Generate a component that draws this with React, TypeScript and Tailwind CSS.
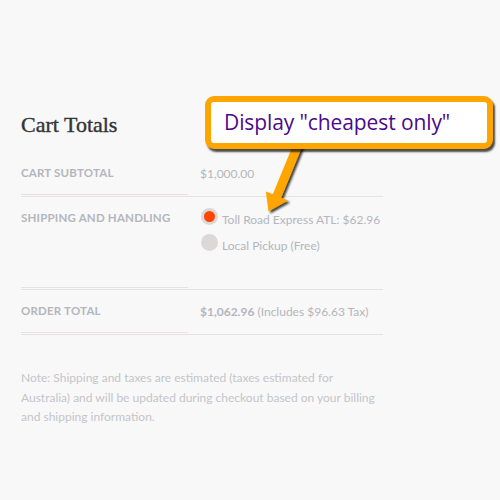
const rowLeft =
  "border-b-[3px] border-double border-[#e6e2e2] text-[11.5px] font-bold uppercase tracking-[0.2px] text-[#b3b6bc]";
const rowRight = "border-b border-[#e6e2e2] text-[12px] text-[#b3b6bc]";

const Radio = ({ checked }: { checked?: boolean }) => (
  <span className="flex h-[17px] w-[17px] shrink-0 items-center justify-center rounded-full bg-[#dcd8d8]">
    {checked && <span className="h-[11px] w-[11px] rounded-full bg-[#ff4500]" />}
  </span>
);

const Callout = () => (
  <>
    <svg className="absolute left-0 top-0" width="500" height="500" viewBox="0 0 500 500">
      <defs>
        <filter id="shadow" x="-20%" y="-20%" width="140%" height="140%">
          <feDropShadow dx="2" dy="2" stdDeviation="1.2" floodColor="#000" floodOpacity="0.75" />
        </filter>
      </defs>
      <polygon
        points="295.8,138.3 304.2,141.7 281.2,197.7 288.1,200.6 268.5,211.5 265.9,191.4 272.8,194.3"
        fill="#ffa500"
        filter="url(#shadow)"
      />
    </svg>
    <div className="absolute left-[205px] top-[96px] flex h-[53px] w-[288px] items-center rounded-[9px] border-[6px] border-[#ffa500] bg-white pl-[13px] shadow-[2px_3px_2px_rgba(0,0,0,0.7)]">
      <span className="font-['Open_Sans',sans-serif] text-[21px] leading-none tracking-[-0.1px] text-[#4b0a8a]">
        Display "cheapest only"
      </span>
    </div>
  </>
);

export default function App() {
  return (
    <div className="relative h-[500px] w-[500px] overflow-hidden bg-[#f8f8f8] font-['Lato',sans-serif]">
      <div className="w-[383px] pl-[21px] pt-[110px]">
        <h2 className="font-['Liberation_Serif',serif] text-[22px] leading-[30px] text-[#353535] [-webkit-text-stroke:0.4px_#353535]">
          Cart Totals
        </h2>

        <div className="mt-[11px] grid grid-cols-[167px_195px]">
          <div className={`${rowLeft} flex h-[46px] items-center`}>Cart Subtotal</div>
          <div className={`${rowRight} flex h-[46px] items-center pl-[12px]`}>$1,000.00</div>

          <div className={`${rowLeft} h-[93px] pt-[13px] leading-[16px]`}>Shipping and Handling</div>
          <div className={`${rowRight} h-[93px] pl-[13px] pt-[11px]`}>
            <div className="flex items-start gap-[4px]">
              <Radio checked />
              <span className="mt-[4px] leading-[16px]">Toll Road Express ATL: $62.96</span>
            </div>
            <div className="mt-[6px] flex items-start gap-[4px]">
              <Radio />
              <span className="mt-[4px] leading-[16px]">Local Pickup (Free)</span>
            </div>
          </div>

          <div className={`${rowLeft} flex h-[45px] items-center`}>Order Total</div>
          <div className={`${rowRight} flex h-[45px] items-center pl-[12px]`}>
            <span className="font-bold">$1,062.96</span>&nbsp;(Includes $96.63 Tax)
          </div>
        </div>

        <p className="mt-[33px] text-[12px] leading-[19.5px] text-[#c4c5c8]">
          Note: Shipping and taxes are estimated (taxes estimated for Australia) and will be updated during
          checkout based on your billing and shipping information.
        </p>
      </div>
      <Callout />
    </div>
  );
}
